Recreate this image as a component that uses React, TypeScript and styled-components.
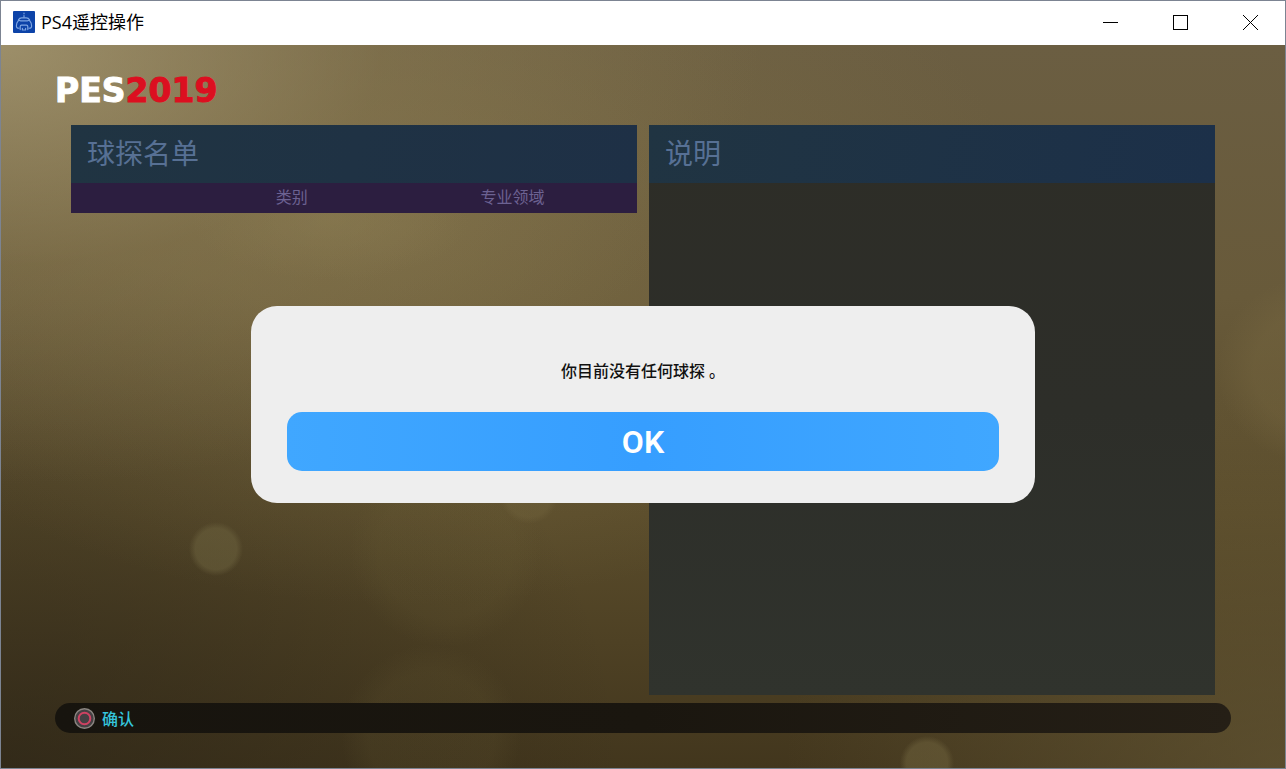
import React from 'react';
import styled, { createGlobalStyle } from 'styled-components';

const GlobalStyle = createGlobalStyle`
  *, *::before, *::after { box-sizing: border-box; }
  body {
    margin: 0;
    font-family: Roboto, 'Noto Sans CJK SC', sans-serif;
  }
`;

const Window = styled.div`
  display: flex;
  flex-direction: column;
  min-height: 100vh;
  border: 1px solid #7c8492;
  background: #fff;
`;

const TitleBar = styled.header`
  display: flex;
  align-items: center;
  height: 44px;
  padding: 0 0 2px 12px;
  background: #fff;
`;

const WindowTitle = styled.h1`
  flex: 1;
  margin: 0 0 0 6px;
  font: 400 18px/24px 'Open Sans', 'Noto Sans CJK SC', sans-serif;
  color: #000;
`;

const WindowButton = styled.button`
  display: grid;
  place-items: center;
  width: 70px;
  height: 42px;
  padding: 0;
  border: 0;
  background: transparent;
  color: #000;
`;

const Stage = styled.main`
  position: relative;
  flex: 1;
  display: flex;
  flex-direction: column;
  padding: 32px 54px 35px;
  background:
    radial-gradient(circle 27px at 215px 504px, rgba(108, 98, 62, 0.55) 76%, transparent),
    radial-gradient(circle 29px at 528px 450px, rgba(112, 98, 60, 0.45) 76%, transparent),
    radial-gradient(circle 27px at 926px 718px, rgba(112, 100, 62, 0.5) 76%, transparent),
    radial-gradient(circle 96px at 445px 506px, rgba(110, 98, 56, 0.14) 70%, transparent),
    radial-gradient(circle 90px at 430px 690px, rgba(110, 98, 56, 0.14) 70%, transparent),
    radial-gradient(circle 92px at 1308px 325px, rgba(122, 106, 66, 0.35) 60%, transparent),
    radial-gradient(ellipse 140px 60px at 330px 175px, rgba(146, 132, 88, 0.3), transparent),
    radial-gradient(ellipse 760px 440px at 0 0, rgba(172, 158, 118, 0.75), rgba(150, 134, 92, 0.3) 50%, transparent),
    radial-gradient(ellipse 620px 380px at 400px 180px, rgba(134, 118, 74, 0.5), transparent),
    radial-gradient(ellipse 620px 520px at 0 100%, rgba(40, 34, 22, 0.6), transparent),
    radial-gradient(ellipse 500px 380px at 100% 100%, rgba(106, 92, 56, 0.6), transparent),
    linear-gradient(180deg, #6b5e42 0%, #685a3a 35%, #5a4c2b 65%, #42361d 100%);
`;

const Logo = styled.div`
  font: 700 33px/28px 'DejaVu Sans', sans-serif;
  color: #fff;
  -webkit-text-stroke: 1px currentColor;
`;

const LogoYear = styled.span`
  color: #dc0f20;
`;

const Panels = styled.div`
  flex: 1;
  display: grid;
  grid-template-columns: 1fr 1fr;
  gap: 12px;
  margin: 20px 16px 8px;
`;

const Panel = styled.section<{ $filled?: boolean }>`
  background: ${({ $filled }) =>
    $filled ? 'linear-gradient(180deg, #2d2d27, #2d2e29 50%, #30332d)' : 'transparent'};
`;

const PanelTitle = styled.h2<{ $to: string }>`
  height: 58px;
  margin: 0;
  padding: 0 16px;
  font-size: 28px;
  font-weight: 400;
  line-height: 60px;
  color: #577094;
  background: linear-gradient(100deg, #203442, ${({ $to }) => $to});
`;

const ScoutTable = styled.table`
  width: 100%;
  border-collapse: collapse;
  table-layout: fixed;
  background: #2c1e40;
`;

const ColumnHead = styled.th<{ $width: string }>`
  width: ${({ $width }) => $width};
  height: 30px;
  padding: 0;
  font-size: 16px;
  font-weight: 400;
  line-height: 24px;
  color: #6c6292;
`;

const HintBar = styled.footer`
  display: flex;
  align-items: center;
  height: 30px;
  padding-left: 18px;
  border-radius: 15px;
  background: linear-gradient(90deg, #17140e, #1a160f 50%, #251f16);
`;

const Hint = styled.button`
  display: flex;
  align-items: center;
  gap: 6px;
  padding: 0;
  border: 0;
  background: transparent;
  font: 500 16px/24px 'Noto Sans CJK SC', sans-serif;
  color: #35c4dc;
`;

const Overlay = styled.div`
  position: absolute;
  inset: 0 0 4px;
  display: grid;
  place-items: center;
`;

const Dialog = styled.div`
  display: flex;
  flex-direction: column;
  gap: 28px;
  width: 61%;
  padding: 54px 36px 32px;
  border-radius: 26px;
  background: #eee;
`;

const Message = styled.p`
  margin: 0;
  font-size: 16px;
  font-weight: 500;
  line-height: 24px;
  text-align: center;
  color: #111;
`;

const OkButton = styled.button`
  height: 59px;
  padding: 0;
  border: 0;
  border-radius: 15px;
  background: linear-gradient(90deg, #40a7ff, #369eff 50%, #40a7ff);
  font: 600 32px/40px Roboto, sans-serif;
  color: #fff;
`;

const AppIcon = () => (
  <svg width="22" height="22" viewBox="0 0 22 22" aria-hidden="true">
    <rect width="22" height="22" rx="1" fill="#0d43a8" />
    <g fill="none" stroke="#7fa6e2" strokeWidth="1.2" strokeLinecap="round" strokeLinejoin="round">
      <path d="M11 2v.8M11 4.600v1.600" />
      <path d="M5.500 8.800C6.200 7.400 7.300 6.800 8.600 6.800h4.800c1.300 0 2.400.6 3.100 2" />
      <path d="M6 17.200c-1.800.2-2.600-.6-2.600-2.200 0-2 .5-3.600 1.400-4.700.6-.8 1.700-1 2.600-.5h7.200c.9-.5 2-.3 2.600.5.900 1.100 1.400 2.700 1.400 4.700 0 1.600-.8 2.400-2.600 2.200" />
      <path d="M7.200 18.600v-3c0-.9.500-1.400 1.400-1.400h4.800c.9 0 1.400.5 1.400 1.400v3M9.400 17.400v1.600h3.200v-1.600" />
    </g>
  </svg>
);

const CircleButtonIcon = () => (
  <svg width="23" height="23" viewBox="0 0 23 23" aria-hidden="true">
    <circle cx="11.500" cy="11.500" r="9.800" fill="#454043" stroke="#8b8580" strokeWidth="1.400" />
    <circle cx="11.500" cy="11.500" r="5.800" fill="none" stroke="#cf4262" strokeWidth="2" />
  </svg>
);

export default function App() {
  return (
    <>
      <GlobalStyle />
      <Window>
        <TitleBar>
          <AppIcon />
          <WindowTitle>PS4遥控操作</WindowTitle>
          <WindowButton aria-label="最小化">
            <svg width="15" height="15" viewBox="0 0 15 15">
              <path d="M0 7.500h15" stroke="currentColor" />
            </svg>
          </WindowButton>
          <WindowButton aria-label="最大化">
            <svg width="15" height="15" viewBox="0 0 15 15">
              <rect x=".5" y=".5" width="14" height="14" fill="none" stroke="currentColor" />
            </svg>
          </WindowButton>
          <WindowButton aria-label="关闭">
            <svg width="15" height="15" viewBox="0 0 15 15">
              <path d="M0 0l15 15M15 0L0 15" stroke="currentColor" />
            </svg>
          </WindowButton>
        </TitleBar>
        <Stage>
          <Logo>
            PES<LogoYear>2019</LogoYear>
          </Logo>
          <Panels>
            <Panel>
              <PanelTitle $to="#1e3046">球探名单</PanelTitle>
              <ScoutTable>
                <thead>
                  <tr>
                    <ColumnHead as="td" $width="20%" />
                    <ColumnHead scope="col" $width="38%">类别</ColumnHead>
                    <ColumnHead scope="col" $width="40%">专业领域</ColumnHead>
                    <ColumnHead as="td" $width="2%" />
                  </tr>
                </thead>
              </ScoutTable>
            </Panel>
            <Panel $filled>
              <PanelTitle $to="#1c3049">说明</PanelTitle>
            </Panel>
          </Panels>
          <HintBar>
            <Hint>
              <CircleButtonIcon />
              确认
            </Hint>
          </HintBar>
          <Overlay>
            <Dialog role="dialog" aria-modal="true" aria-labelledby="message">
              <Message id="message">你目前没有任何球探 。</Message>
              <OkButton>OK</OkButton>
            </Dialog>
          </Overlay>
        </Stage>
      </Window>
    </>
  );
}
